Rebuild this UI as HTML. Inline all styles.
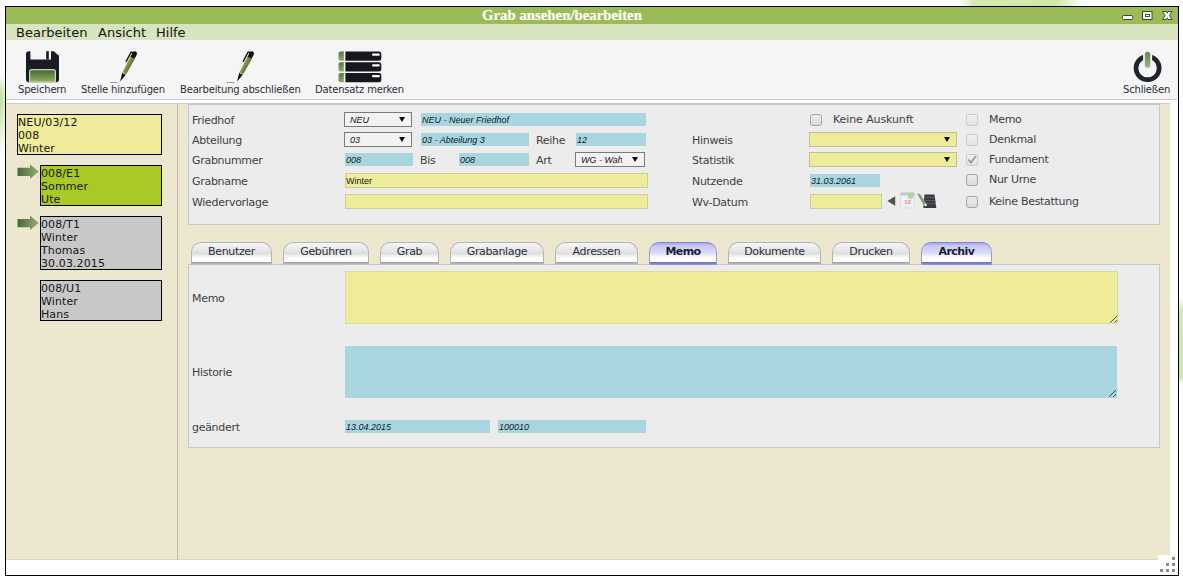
<!DOCTYPE html>
<html lang="de">
<head>
<meta charset="utf-8">
<title>Grab ansehen/bearbeiten</title>
<style>
*{box-sizing:border-box;margin:0;padding:0}
html,body{width:1183px;height:579px;overflow:hidden;background:#fff}
body{position:relative;font-family:"DejaVu Sans","Liberation Sans",sans-serif;font-size:11px;color:#333}
body>*{position:absolute}
.t{white-space:nowrap}
#deco1{left:0;top:74px;width:5px;height:84px;background:linear-gradient(to right,rgba(255,255,255,0),rgba(255,255,255,.5)),linear-gradient(to bottom,rgba(255,255,255,0),#c6e3a0 20%,#bfdf96 36%,#dcedc6 62%,rgba(255,255,255,0))}
#deco2{left:1179px;top:298px;width:4px;height:86px;background:linear-gradient(to bottom,rgba(255,255,255,0),#d6e8b6 15%,#d1e5ad 92%,rgba(255,255,255,0))}
#deco3{left:960px;top:0;width:124px;height:6px;background:linear-gradient(to right,rgba(255,255,255,0),#d4e8b3 11%,#d2e7b0 78%,rgba(255,255,255,0))}
#win{left:5px;top:6px;width:1174px;height:570px;border:1px solid #000;background:#fff}
#title{left:6px;top:7px;width:1172px;height:17px;background:#9bbb59}
#titletx{left:482px;top:7px;height:17px;font:bold 14.8px/17px "Liberation Serif",serif;color:#fffff0;text-shadow:0 0 1px rgba(255,255,255,.5)}
#menu{left:6px;top:24px;width:1172px;height:16px;background:#d7e4bd}
.m{top:25px;font-size:13px;line-height:16px;color:#151515}
#tool{left:6px;top:40px;width:1172px;height:59px;background:#f5f5f5}
#toolline{left:6px;top:99px;width:1171px;height:1px;background:#c9c9c9}
.tl{top:84px;font-size:10px;line-height:12px;color:#2b2b36;letter-spacing:-0.18px}
#main{left:6px;top:103px;width:1164px;height:457px;background:#ede7cf;border-top:1px solid #cfcbbd;border-bottom:1px solid #ddd6c2}
#divider{left:177px;top:103px;width:1px;height:457px;background:#c0bbac}
.box{border:1px solid #000;font-size:11px;line-height:13px;color:#151515;padding:1px 0 0 0;white-space:nowrap;letter-spacing:.1px}
.pn{background:#ececec;border:1px solid #c9c9c9}
.lb{font-size:11px;line-height:14px;color:#404040;white-space:nowrap;letter-spacing:-0.3px}
.f{height:13px;font:italic 9px/15px "Liberation Sans",sans-serif;color:#0b1b26;padding-left:1px;white-space:nowrap;overflow:hidden}
.b{background:#a9d5df}
.y{background:#eeec98;border:1px solid #d0cc9e;height:15px;line-height:15px;padding-left:0}
.sel{height:15px;background:#f2f2f2;border:1px solid #7a7a7a;font:italic 9px/15px "Liberation Sans",sans-serif;color:#111;padding-left:5px;white-space:nowrap;overflow:hidden}
.ysel{height:15px;background:#eeec98;border:1px solid #c2bf98}
.arr{width:0;height:0;border-left:3.5px solid transparent;border-right:3.5px solid transparent;border-top:5.5px solid #0a0a0a}
.cb{width:12px;height:12px;border:1px solid #a6a6a6;border-radius:3px;background:linear-gradient(#ececec,#dbdbdb)}
.cb.d{border-color:#cbcbcb;background:linear-gradient(#f1f1f1,#e4e4e4)}
.tab{top:242px;height:23px;border:1px solid #b4b4b4;border-bottom:0;border-radius:10px 10px 0 0;background:linear-gradient(#f7f7f7 0%,#dedede 48%,#fff 68%,#fff 85%,#9e9e9e 87%,#c9c9c9 100%);font-size:11px;line-height:18px;text-align:center;color:#2e2e38;letter-spacing:-0.35px;white-space:nowrap}
.tab.a{border-color:#8484d6 #9a9ad8 #8484d6 #9a9ad8;background:linear-gradient(#a6a6ec 0%,#c9c9f5 14%,#dadafa 45%,#fff 66%,#fff 85%,#6a6ad0 87%,#9a9ae2 100%);font-weight:bold;color:#1d1d2b;letter-spacing:-0.55px}
.grip{width:9px;height:9px}
</style>
</head>
<body>
<div id="deco1"></div><div id="deco2"></div><div id="deco3"></div>
<div id="win"></div>
<div id="title"></div>
<div id="titletx" class="t">Grab ansehen/bearbeiten</div>
<svg style="left:1120px;top:9px" width="56" height="13" viewBox="1120 9 56 13">
<rect x="1122.5" y="15.5" width="10" height="4" rx="1" fill="#fff" stroke="#3c4a2a" stroke-width="1"/>
<rect x="1142.5" y="11.5" width="9.5" height="8" fill="#fff" stroke="#3c4a2a" stroke-width="1"/>
<rect x="1145.5" y="14.5" width="4" height="2" fill="#fff" stroke="#3c4a2a" stroke-width="1"/>
<path d="M1162.5 11.5h3.9l.85 1.7.85-1.7h3.9l-2.6 4 2.6 4h-3.9l-.85-1.7-.85 1.7h-3.9l2.6-4z" fill="#fff" stroke="#3c4a2a" stroke-width="1" stroke-linejoin="round"/>
</svg>
<div id="menu"></div>
<div class="m t" style="left:16px">Bearbeiten</div><div class="m t" style="left:98px">Ansicht</div><div class="m t" style="left:156px">Hilfe</div>
<div id="tool"></div><div id="toolline"></div>
<svg style="left:6px;top:44px" width="1172" height="42" viewBox="6 44 1172 42">
<defs>
<linearGradient id="gl" x1="0" y1="0" x2="0" y2="1"><stop offset="0" stop-color="#46623a"/><stop offset="1" stop-color="#90b257"/></linearGradient>
<linearGradient id="gp" x1="0" y1="0" x2="1" y2="0"><stop offset="0" stop-color="#a0b074"/><stop offset=".35" stop-color="#7a914b"/><stop offset="1" stop-color="#5f773c"/></linearGradient>
<linearGradient id="gs" x1="0" y1="0" x2="0" y2="1"><stop offset="0" stop-color="#55783f"/><stop offset="1" stop-color="#8cad62"/></linearGradient>
<linearGradient id="gb" x1="0" y1="0" x2="0" y2="1"><stop offset="0" stop-color="#6b8050"/><stop offset="1" stop-color="#a0b684"/></linearGradient>
<g id="pen">
<line x1="-10" y1="1" x2="-2.5" y2="1" stroke="#9a9a9a" stroke-width="1"/>
<g transform="rotate(27.8)">
<polygon points="0,0 -2,-8.8 2,-8.8" fill="#0d0d0f"/>
<polygon points="-2.1,-8.8 2.1,-8.8 2.6,-27.5 -2.6,-27.5" fill="url(#gp)"/>
<rect x="-2.1" y="-9.5" width="4.2" height="0.8" fill="#c9d6a8"/>
<rect x="-2.6" y="-27.7" width="5.2" height="0.8" fill="#b9c2a6"/>
<path d="M-2.3-26.9v-4.6a2.3 2.3 0 0 1 4.6 0v4.6z" fill="#101012"/>
<path d="M-2.2-31.3h-1.7v10.6" fill="none" stroke="#101012" stroke-width="1.4" stroke-linecap="round" stroke-linejoin="round"/>
</g></g>
<g id="srow">
<path d="M340.5 0h3.3v9.3h-3.3a2 2 0 0 1-2-2v-5.3a2 2 0 0 1 2-2z" fill="url(#gs)"/>
<path d="M345.4 0h33.4a2.5 2.5 0 0 1 2.5 2.5v4.3a2.5 2.5 0 0 1-2.5 2.5h-33.4z" fill="#17181f"/>
<rect x="372" y="2" width="7.8" height="2.4" rx="1" fill="#fff"/>
</g>
</defs>
<!-- floppy -->
<path d="M29 51.2h1.4v8.2h20.6v-8.2h2.8l5.2 4.6v23.4a3 3 0 0 1-3 3h-27a3 3 0 0 1-3-3v-25a3 3 0 0 1 3-3z" fill="#191a24"/>
<rect x="46.2" y="51.2" width="2.6" height="8.3" fill="#191a24"/>
<path d="M29.6 82v-10.4a2 2 0 0 1 2-2h21.8a2 2 0 0 1 2 2v10.4z" fill="url(#gl)" stroke="#c9d6bb" stroke-width="1.2"/>
<use href="#pen" transform="translate(120 81.5)"/>
<use href="#pen" transform="translate(237 81.5)"/>
<use href="#srow" transform="translate(0 51.4)"/>
<use href="#srow" transform="translate(0 62.2)"/>
<use href="#srow" transform="translate(0 72.9)"/>
<!-- power -->
<circle cx="1147.6" cy="68.1" r="11.6" fill="none" stroke="#22242c" stroke-width="4.7"/><rect x="1143.1" y="50" width="9" height="13" fill="#f5f5f5"/>
<rect x="1144.4" y="51.3" width="6.4" height="17" rx="3.2" fill="url(#gb)" stroke="#eef3e4" stroke-width="1"/>
</svg>
<div class="tl t" style="left:18px">Speichern</div><div class="tl t" style="left:81px">Stelle hinzufügen</div><div class="tl t" style="left:180px">Bearbeitung abschließen</div><div class="tl t" style="left:315px">Datensatz merken</div><div class="tl t" style="left:1123px">Schließen</div>
<div id="main"></div><div id="divider"></div>
<div class="box" style="left:17px;top:114px;width:145px;height:41px;background:#f0eb9a">NEU/03/12<br>008<br>Winter</div>
<div class="box" style="left:40px;top:165px;width:122px;height:41px;background:#a9c924">008/E1<br>Sommer<br>Ute</div>
<div class="box" style="left:40px;top:216px;width:122px;height:54px;background:#c8c8c8">008/T1<br>Winter<br>Thomas<br>30.03.2015</div>
<div class="box" style="left:40px;top:280px;width:122px;height:41px;background:#c8c8c8">008/U1<br>Winter<br>Hans</div>
<svg style="left:16px;top:163px" width="24" height="70" viewBox="16 163 24 70">
<defs><linearGradient id="ga" x1="0" y1="0" x2="1" y2="0"><stop offset="0" stop-color="#486839"/><stop offset="1" stop-color="#93b070"/></linearGradient>
<path id="ar" d="M17.5 167.8h12.5v-3.4l8.8 7.2-8.8 7.2v-2.8h-12.5z" fill="url(#ga)"/></defs>
<use href="#ar"/><use href="#ar" transform="translate(0 51.3)"/>
</svg>
<div class="pn" style="left:188px;top:103px;width:972px;height:122px;border-top:2px solid #c6c6c6"></div>
<div class="lb" style="left:192px;top:114px">Friedhof</div><div class="lb" style="left:192px;top:134px">Abteilung</div><div class="lb" style="left:192px;top:154px">Grabnummer</div><div class="lb" style="left:192px;top:175px">Grabname</div><div class="lb" style="left:192px;top:196px">Wiedervorlage</div>
<div class="sel" style="left:344px;top:112px;width:68px">NEU</div><div class="arr" style="left:398.5px;top:116.8px"></div><div class="sel" style="left:344px;top:132px;width:68px">03</div><div class="arr" style="left:398.5px;top:136.8px"></div><div class="f b" style="left:421px;top:113px;width:225px">NEU - Neuer Friedhof</div><div class="f b" style="left:421px;top:133px;width:108px">03 - Abteilung 3</div><div class="lb" style="left:536px;top:134px">Reihe</div><div class="f b" style="left:576px;top:133px;width:70px">12</div><div class="f b" style="left:345px;top:153px;width:68px">008</div><div class="lb" style="left:420px;top:154px">Bis</div><div class="f b" style="left:459px;top:153px;width:70px">008</div><div class="lb" style="left:536px;top:154px">Art</div><div class="sel" style="left:575px;top:152px;width:70px">WG - Wah</div><div style="left:622px;top:153px;width:22px;height:13px;background:#f2f2f2"></div><div class="arr" style="left:632px;top:156.8px"></div><div class="f y" style="left:345px;top:173px;width:303px;font-style:normal">Winter</div><div class="f y" style="left:345px;top:194px;width:303px"></div>
<div class="lb" style="left:692px;top:134px">Hinweis</div><div class="lb" style="left:692px;top:154px">Statistik</div><div class="lb" style="left:692px;top:175px">Nutzende</div><div class="lb" style="left:692px;top:196px">Wv-Datum</div><div class="cb" style="left:810px;top:114px"></div><div class="lb" style="left:833px;top:113px;letter-spacing:-0.1px">Keine Auskunft</div><div class="ysel" style="left:809px;top:132px;width:148px"></div><div class="arr" style="left:943.6px;top:136.8px"></div><div class="ysel" style="left:809px;top:152px;width:148px"></div><div class="arr" style="left:943.6px;top:156.8px"></div><div class="f b" style="left:810px;top:174px;width:70px">31.03.2061</div><div class="f y" style="left:810px;top:194px;width:72px"></div>
<svg style="left:885px;top:191px" width="54" height="19" viewBox="885 191 54 19">
<polygon points="887.4,201 895.2,196.2 895.2,205.8" fill="#505050"/>
<rect x="900.5" y="192.5" width="14" height="15.5" rx="1" fill="#eef1f6" stroke="#d9dde6" stroke-width="1"/>
<rect x="900.5" y="192.5" width="14" height="3" fill="#c7c7cf"/>
<circle cx="910.6" cy="196" r="2.9" fill="#a2dc92"/>
<text x="904.6" y="203.8" font-family="Liberation Sans,sans-serif" font-size="5.6" font-weight="bold" fill="#e58468">12</text>
<path d="M924.5 194.5h10l1.8 13.5h-13z" fill="#3a3b40"/>
<path d="M925.5 197.5h8.5M925 200.5h9.5M924.5 203.5h10.5" stroke="#6b6c72" stroke-width=".7"/>
<path d="M917 193.5l3 .5 6.5 10-1 1.5-2-.5z" fill="#8c9a78"/>
<circle cx="925.6" cy="205" r="1.2" fill="#fff"/>
</svg>
<div class="cb d" style="left:966px;top:114px"></div><div class="lb" style="left:989px;top:113px">Memo</div><div class="cb d" style="left:966px;top:134px"></div><div class="lb" style="left:989px;top:133px">Denkmal</div><div class="cb d" style="left:966px;top:154px"></div><div class="lb" style="left:989px;top:153px">Fundament</div><div class="cb" style="left:966px;top:174px"></div><div class="lb" style="left:989px;top:173px">Nur Urne</div><div class="cb" style="left:966px;top:196px"></div><div class="lb" style="left:989px;top:195px">Keine Bestattung</div><svg style="left:966px;top:154px" width="12" height="12" viewBox="0 0 12 12"><path d="M2.8 6.2l2.2 2.6 4.2-6" fill="none" stroke="#9a9a9a" stroke-width="1.8" stroke-linecap="round" stroke-linejoin="round"/></svg>
<div class="pn" style="left:188px;top:264px;width:972px;height:184px"></div>
<div class="tab" style="left:191px;width:81px">Benutzer</div><div class="tab" style="left:283px;width:86px">Gebühren</div><div class="tab" style="left:380px;width:59px">Grab</div><div class="tab" style="left:450px;width:94px">Grabanlage</div><div class="tab" style="left:555px;width:83px">Adressen</div><div class="tab a" style="left:649px;width:68px">Memo</div><div class="tab" style="left:728px;width:93px">Dokumente</div><div class="tab" style="left:832px;width:78px">Drucken</div><div class="tab a" style="left:921px;width:71px">Archiv</div>
<div class="lb" style="left:192px;top:292px">Memo</div><div class="lb" style="left:192px;top:366px">Historie</div><div class="lb" style="left:192px;top:421px">geändert</div><div style="left:345px;top:271px;width:773px;height:53px;background:#eeec98;border:1px solid #dcd9a2"></div><div style="left:345px;top:346px;width:771.7px;height:51.5px;background:#a9d5df"></div><svg class="grip" style="left:1109px;top:315px" viewBox="0 0 9 9"><path d="M8 1L1.3 7.6M8 5.1L5.5 7.6" stroke="#47472a" stroke-width="1" fill="none"/></svg><svg class="grip" style="left:1107.7px;top:389.2px" viewBox="0 0 9 9"><path d="M8 1L1.3 7.6M8 5.1L5.5 7.6" stroke="#33474a" stroke-width="1" fill="none"/></svg><div class="f b" style="left:345px;top:420px;width:145px">13.04.2015</div><div class="f b" style="left:498px;top:420px;width:148px">100010</div>
<svg style="left:1158px;top:555px" width="19" height="19" viewBox="1158 555 19 19"><rect x="1158" y="555" width="12" height="5" fill="#fff"/><g fill="#8a8a8a"><rect x="1172" y="557" width="3" height="3"/><rect x="1166" y="563" width="3" height="3"/><rect x="1172" y="563" width="3" height="3"/><rect x="1160" y="569" width="3" height="3"/><rect x="1166" y="569" width="3" height="3"/><rect x="1172" y="569" width="3" height="3"/></g></svg>
</body>
</html>
